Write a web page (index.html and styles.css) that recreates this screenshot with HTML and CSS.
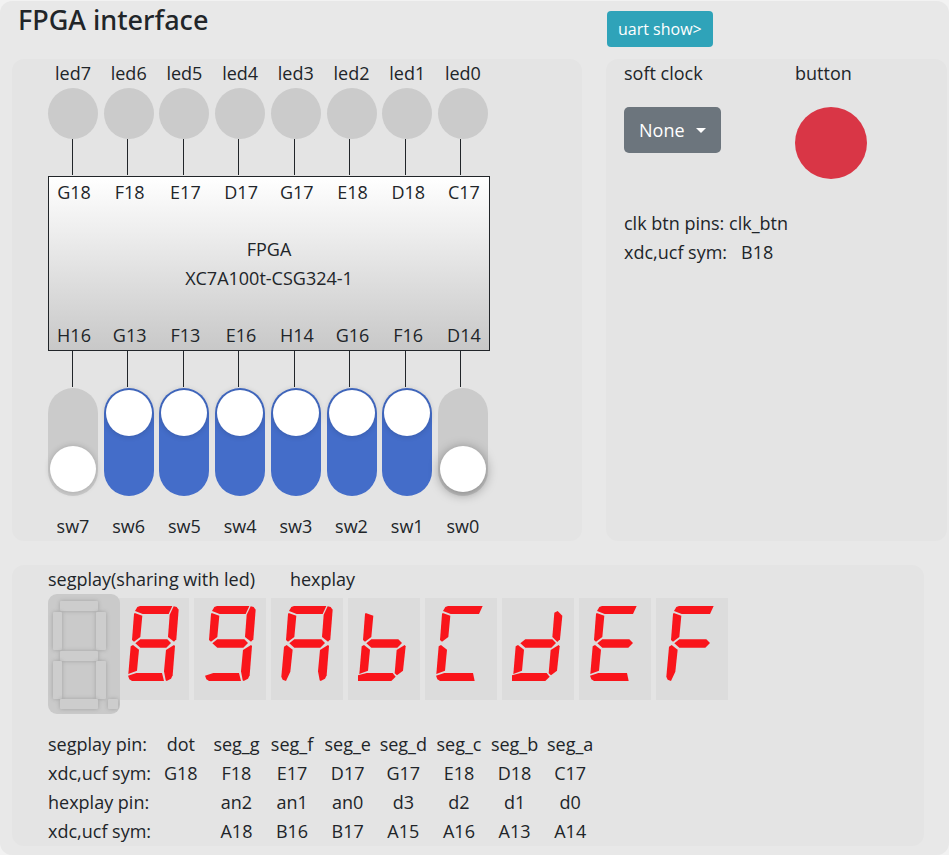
FILE: index.html
```html
<!DOCTYPE html>
<html lang="en">
<head>
<meta charset="utf-8">
<title>FPGA interface</title>
<link rel="stylesheet" href="styles.css">
</head>
<body>
<svg class="defs" aria-hidden="true">
  <defs>
    <path id="a" d="M54 39L61 27L69 24H166L155 48H77Z"/>
    <path id="a-open" d="M54 39L61 27L69 24H173L162 48H77Z"/>
    <path id="b" d="M170 25L179 27L185 35L178 124L171 131L153 117L158 50Z"/>
    <path id="b-free" d="M167 39L181 53L174 124L166 132L151 117L157 44Z"/>
    <path id="c" d="M171 141L174 144L167 232L162 242L149 249L146 247L141 220L147 156Z"/>
    <path id="c-short" d="M170 141L173 145L165 218L147 232L140 226L146 156Z"/>
    <path id="d" d="M33 233L58 225H135L141 249H45L37 244Z"/>
    <path id="d-open" d="M33 233L58 225H144L149 249H45L37 244Z"/>
    <path id="d-round" d="M30 232L56 225H134L143 236L130 249H30Z"/>
    <path id="e" d="M48 141L66 155L60 218L34 228L41 145Z"/>
    <path id="e-free" d="M47 141L65 155L58 221L45 249L35 245L31 236L39 146Z"/>
    <path id="f" d="M53 45L76 53L70 117L51 131L45 126L51 48Z"/>
    <path id="g" d="M55 136L70 124H151L162 135L148 149H70Z"/>
  </defs>
</svg>
<main class="page">
  <header class="columns header">
    <h1>FPGA interface</h1>
    <div><button class="uart" type="button">uart show&gt;</button></div>
  </header>

  <div class="columns">
    <section class="panel board-panel">
      <div class="board">
        <div class="row"><span>led7</span><span>led6</span><span>led5</span><span>led4</span><span>led3</span><span>led2</span><span>led1</span><span>led0</span></div>
        <div class="row leds"><i></i><i></i><i></i><i></i><i></i><i></i><i></i><i></i></div>
        <div class="wires"><i></i><i></i><i></i><i></i><i></i><i></i><i></i><i></i></div>
        <div class="chip">
          <div class="chip-row"><span>G18</span><span>F18</span><span>E17</span><span>D17</span><span>G17</span><span>E18</span><span>D18</span><span>C17</span></div>
          <div class="chip-name">FPGA<br>XC7A100t-CSG324-1</div>
          <div class="chip-row"><span>H16</span><span>G13</span><span>F13</span><span>E16</span><span>H14</span><span>G16</span><span>F16</span><span>D14</span></div>
        </div>
        <div class="wires"><i></i><i></i><i></i><i></i><i></i><i></i><i></i><i></i></div>
        <div class="row">
          <label class="switch"><input type="checkbox"><span>sw7</span></label>
          <label class="switch"><input type="checkbox" checked><span>sw6</span></label>
          <label class="switch"><input type="checkbox" checked><span>sw5</span></label>
          <label class="switch"><input type="checkbox" checked><span>sw4</span></label>
          <label class="switch"><input type="checkbox" checked><span>sw3</span></label>
          <label class="switch"><input type="checkbox" checked><span>sw2</span></label>
          <label class="switch"><input type="checkbox" checked><span>sw1</span></label>
          <label class="switch raised"><input type="checkbox"><span>sw0</span></label>
        </div>
      </div>
    </section>

    <section class="panel clock-panel">
      <div class="controls">
        <div>
          <label for="clock">soft clock</label>
          <div class="dropdown"><select id="clock"><option>None</option></select></div>
        </div>
        <div>
          <label for="push">button</label>
          <button class="push" id="push" type="button"></button>
        </div>
      </div>
      <div>clk btn pins: clk_btn</div>
      <div class="symbol"><span>xdc,ucf sym:</span><span>B18</span></div>
    </section>
  </div>

  <section class="panel display-panel">
    <div class="captions"><span>segplay(sharing with led)</span><span>hexplay</span></div>
    <div class="digits">
      <svg class="segplay" viewBox="0 0 72 120">
        <rect x="12" y="7" width="38" height="10" rx="1"/>
        <rect x="5" y="18" width="9" height="38" rx="1"/>
        <rect x="48" y="18" width="10" height="38" rx="1"/>
        <rect x="12" y="57" width="38" height="10" rx="1"/>
        <rect x="5" y="67" width="9" height="38" rx="1"/>
        <rect x="48" y="67" width="10" height="38" rx="1"/>
        <rect x="12" y="105" width="38" height="10" rx="1"/>
        <rect x="60" y="105" width="10" height="10" rx="1"/>
      </svg>
      <div class="hexplay">
        <svg viewBox="0 0 216 306"><use href="#a"/><use href="#b"/><use href="#c"/><use href="#d"/><use href="#e"/><use href="#f"/><use href="#g"/></svg>
        <svg viewBox="0 0 216 306"><use href="#a"/><use href="#b"/><use href="#c"/><use href="#d"/><use href="#f"/><use href="#g"/></svg>
        <svg viewBox="0 0 216 306"><use href="#a"/><use href="#b"/><use href="#c"/><use href="#e-free"/><use href="#f"/><use href="#g"/></svg>
        <svg viewBox="0 0 216 306"><use href="#c-short"/><use href="#d-round"/><use href="#e"/><use href="#f"/><use href="#g"/></svg>
        <svg viewBox="0 0 216 306"><use href="#a-open"/><use href="#d-open"/><use href="#e"/><use href="#f"/></svg>
        <svg viewBox="0 0 216 306"><use href="#b-free"/><use href="#c-short"/><use href="#d-round"/><use href="#e"/><use href="#g"/></svg>
        <svg viewBox="0 0 216 306"><use href="#a-open"/><use href="#d-open"/><use href="#e"/><use href="#f"/><use href="#g"/></svg>
        <svg viewBox="0 0 216 306"><use href="#a-open"/><use href="#e-free"/><use href="#f"/><use href="#g"/></svg>
      </div>
    </div>
    <table class="pins">
      <tr><th scope="row">segplay pin:</th><td>dot</td><td>seg_g</td><td>seg_f</td><td>seg_e</td><td>seg_d</td><td>seg_c</td><td>seg_b</td><td>seg_a</td></tr>
      <tr><th scope="row">xdc,ucf sym:</th><td>G18</td><td>F18</td><td>E17</td><td>D17</td><td>G17</td><td>E18</td><td>D18</td><td>C17</td></tr>
      <tr><th scope="row">hexplay pin:</th><td></td><td>an2</td><td>an1</td><td>an0</td><td>d3</td><td>d2</td><td>d1</td><td>d0</td></tr>
      <tr><th scope="row">xdc,ucf sym:</th><td></td><td>A18</td><td>B16</td><td>B17</td><td>A15</td><td>A16</td><td>A13</td><td>A14</td></tr>
    </table>
  </section>
</main>
</body>
</html>
```
FILE: styles.css
```css
* {
  box-sizing: border-box;
}

body {
  margin: 0;
  padding-top: 1px;
  background: #f2f2f2;
  color: #212529;
  font: 18px/29px "Open Sans", "Noto Sans", sans-serif;
}

.defs {
  display: none;
}

.page {
  padding: 0 2px 9px 12px;
  border-radius: 12px;
  background: #e8e8e8;
}

.columns {
  display: grid;
  grid-template-columns: 570fr 341fr;
  gap: 24px;
}

.header {
  height: 58px;
}

h1 {
  margin: 0;
  padding-left: 6px;
  font-family: "Noto Sans", "Open Sans", sans-serif;
  font-size: 27px;
  font-weight: 500;
  line-height: 38px;
}

.uart {
  height: 36px;
  margin: 10px 0 0 1px;
  padding: 0 11px;
  border: 0;
  border-radius: 4px;
  background: #2fa3b9;
  color: #fff;
  font: inherit;
  font-size: 16px;
}

.panel {
  border-radius: 12px;
  background: #e4e4e4;
}

.board-panel {
  padding-left: 36px;
}

.board {
  width: 442px;
}

.row,
.chip-row {
  display: flex;
  justify-content: space-between;
  text-align: center;
}

.row {
  padding-right: 2px;
}

.row > *,
.chip-row > * {
  width: 50px;
}

.leds i {
  height: 51px;
  border-radius: 50%;
  background: #cbcbcb;
}

.wires {
  display: flex;
  justify-content: space-between;
  margin-bottom: 1px;
  padding: 0 29px 0 24px;
}

.wires i {
  width: 1px;
  height: 36px;
  background: #212529;
}

.chip {
  display: flex;
  flex-direction: column;
  justify-content: space-between;
  height: 175px;
  padding-top: 1px;
  border: 1px solid #212529;
  background: linear-gradient(#fff, #c8c8c8);
  text-align: center;
}

.switch input {
  appearance: none;
  display: block;
  width: 50px;
  height: 108px;
  margin: 0 0 16px;
  padding: 58px 2px 0;
  border-radius: 25px;
  background: #cbcbcb;
}

.switch input::before {
  content: "";
  display: block;
  height: 46px;
  border-radius: 50%;
  background: #fff;
  box-shadow: 0 0 6px rgba(0, 0, 0, 0.2);
}

.switch input:checked {
  padding-top: 2px;
  background: #446dc9;
}

.switch.raised input::before {
  box-shadow: 0 2px 12px rgba(0, 0, 0, 0.4);
}

.switch span {
  display: block;
}

.clock-panel {
  padding-left: 18px;
}

.controls {
  display: grid;
  grid-template-columns: 171px 1fr;
  height: 150px;
}

.controls label {
  display: block;
  margin-bottom: 19px;
}

.dropdown {
  position: relative;
  width: 97px;
}

.dropdown select {
  appearance: none;
  width: 100%;
  height: 46px;
  padding: 0 15px;
  border: 0;
  border-radius: 5px;
  background: #6c757d;
  color: #fff;
  font: inherit;
}

.dropdown::after {
  content: "";
  position: absolute;
  top: 21px;
  right: 15px;
  border: 5px solid transparent;
  border-top-color: #fff;
  border-bottom: 0;
  pointer-events: none;
}

.push {
  display: block;
  width: 72px;
  height: 72px;
  padding: 0;
  border: 0;
  border-radius: 50%;
  background: #d93646;
}

.symbol {
  display: flex;
  gap: 14px;
}

.display-panel {
  margin: 24px 23px 0 0;
  padding-left: 36px;
}

.captions {
  display: flex;
  gap: 35px;
}

.digits {
  display: flex;
  align-items: flex-start;
  margin-bottom: 16px;
}

.segplay {
  position: relative;
  z-index: 1;
  width: 72px;
  height: 120px;
  border-radius: 9px;
  background: #cacaca;
  fill: #cdcdcd;
}

.segplay rect {
  filter: drop-shadow(0 0 2px rgba(0, 0, 0, 0.2));
}

.hexplay {
  display: flex;
  gap: 5px;
  margin: 4px 0 0 -3px;
}

.hexplay svg {
  width: 72px;
  height: 102px;
  background: #dcdcdc;
  fill: #f9151b;
}

.pins {
  width: 550px;
  table-layout: fixed;
  border-collapse: collapse;
}

.pins th {
  width: 105px;
  padding: 0;
  font-weight: 400;
  text-align: left;
  white-space: nowrap;
}

.pins td {
  height: 29px;
  padding: 0;
  text-align: center;
}
```
